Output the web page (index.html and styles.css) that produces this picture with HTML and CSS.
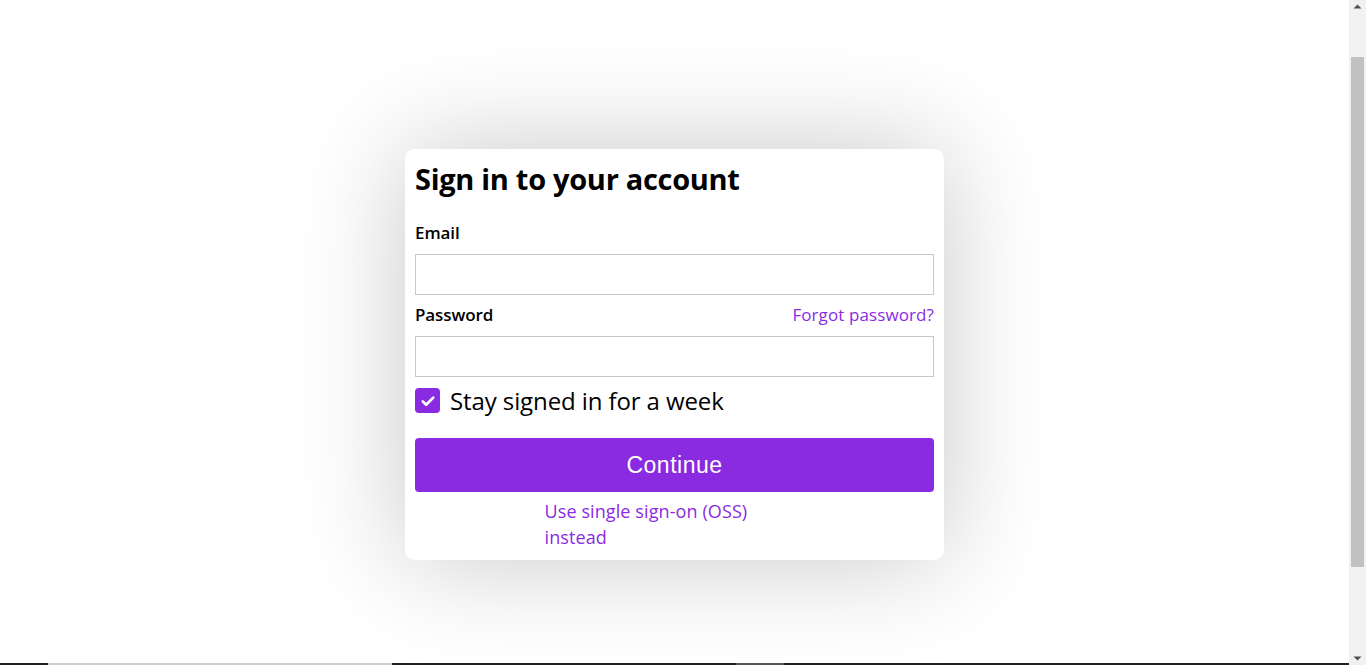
FILE: index.html
```html
<!DOCTYPE html>
<html lang="en">
<head>
<meta charset="utf-8">
<title>Sign in</title>
<link rel="stylesheet" href="styles.css">
</head>
<body>
<div class="viewport">
  <main class="page">
    <form class="card">
      <h1 class="title">Sign in to your account</h1>
      <label class="label" for="email">Email</label>
      <input class="input" id="email" type="email">
      <div class="row">
        <label class="label" for="pw">Password</label>
        <a class="link" href="#">Forgot password?</a>
      </div>
      <input class="input" id="pw" type="password">
      <label class="check">
        <span class="box"><svg viewBox="0 0 24 24" width="18" height="18"><path d="M5 12.5l4.5 4.5L19 7.5" fill="none" stroke="#fff" stroke-width="3.6" stroke-linecap="round" stroke-linejoin="round"/></svg></span>
        <span class="check-text">Stay signed in for a week</span>
      </label>
      <button class="btn" type="button">Continue</button>
      <div class="sso"><a class="link" href="#">Use single sign-on (OSS) instead</a></div>
    </form>
  </main>
  <div class="strip">
    <span class="seg dark w48"></span>
    <span class="seg light w344"></span>
    <span class="seg dark w344"></span>
    <span class="seg mid w48"></span>
    <span class="seg dark grow"></span>
  </div>
</div>
<div class="scrollbar">
  <svg class="arrow" viewBox="0 0 17 12" width="17" height="12"><path d="M4.5 8.5h8L8.5 4.5z" fill="#505050"/></svg>
  <div class="track"><div class="thumb"></div></div>
  <svg class="arrow" viewBox="0 0 17 12" width="17" height="12"><path d="M4.5 3.5h8L8.5 7.5z" fill="#505050"/></svg>
</div>
</body>
</html>
```
FILE: styles.css
```css
html, body {
  margin: 0;
  padding: 0;
  background: #fff;
}
body {
  font-family: "Open Sans", "DejaVu Sans", sans-serif;
  color: #000;
  height: 665px;
  overflow: hidden;
  display: flex;
}
.viewport {
  flex: 1;
  display: flex;
  flex-direction: column;
  min-width: 0;
}
.page {
  display: flex;
  justify-content: center;
  align-items: flex-start;
  padding-top: 149px;
  height: 663px;
  box-sizing: border-box;
}
.card {
  width: 539px;
  box-sizing: border-box;
  background: #fff;
  border-radius: 10px;
  padding: 10px 10px 9px;
  box-shadow: 0 0 110px rgba(0, 0, 0, 0.22);
  display: flex;
  flex-direction: column;
}
.title {
  margin: 0;
  font-size: 29px;
  font-weight: 700;
  letter-spacing: -0.3px;
  line-height: 40px;
  height: 40px;
}
.label {
  font-size: 17px;
  font-weight: 600;
  line-height: 24px;
  letter-spacing: -0.1px;
}
.card > .label {
  margin-top: 22px;
  margin-bottom: 9px;
}
.input {
  height: 41px;
  box-sizing: border-box;
  border: 1px solid #c8c8c8;
  border-radius: 0;
  padding: 0 8px;
  margin: 0;
  font: inherit;
  width: 100%;
}
.row {
  display: flex;
  justify-content: space-between;
  align-items: center;
  margin-top: 8px;
  margin-bottom: 9px;
  line-height: 24px;
}
.link {
  color: #8a2be2;
  text-decoration: none;
  font-size: 17px;
  letter-spacing: 0.1px;
}
.check {
  display: flex;
  align-items: center;
  gap: 10px;
  margin-top: 11px;
  height: 25px;
}
.box {
  width: 25px;
  height: 25px;
  border-radius: 4px;
  background: #8a2be2;
  display: flex;
  align-items: center;
  justify-content: center;
}
.check-text {
  font-size: 24px;
  line-height: 25px;
  letter-spacing: -0.1px;
}
.btn {
  margin-top: 25px;
  height: 54px;
  border: none;
  border-radius: 4px;
  background: #8a2be2;
  color: #fff;
  font-family: "Liberation Sans", Arial, sans-serif;
  font-size: 23px;
  letter-spacing: 0.5px;
  cursor: pointer;
}
.sso {
  width: 260px;
  align-self: center;
  margin-top: 7px;
  line-height: 25px;
}
.sso .link {
  font-size: 18px;
  line-height: 25px;
}
.strip {
  display: flex;
  height: 2px;
}
.seg { display: block; height: 2px; }
.dark { background: #222; }
.light { background: #cfcfcf; }
.mid { background: #555; }
.w48 { width: 48px; }
.w344 { width: 344px; }
.grow { flex: 1; }
.scrollbar {
  width: 17px;
  flex: none;
  background: #f1f1f1;
  display: flex;
  flex-direction: column;
}
.arrow {
  display: block;
  flex: none;
}
.track {
  flex: 1;
  padding: 45px 2px 86px;
  display: flex;
}
.thumb {
  flex: 1;
  background: #c1c1c1;
}
```
